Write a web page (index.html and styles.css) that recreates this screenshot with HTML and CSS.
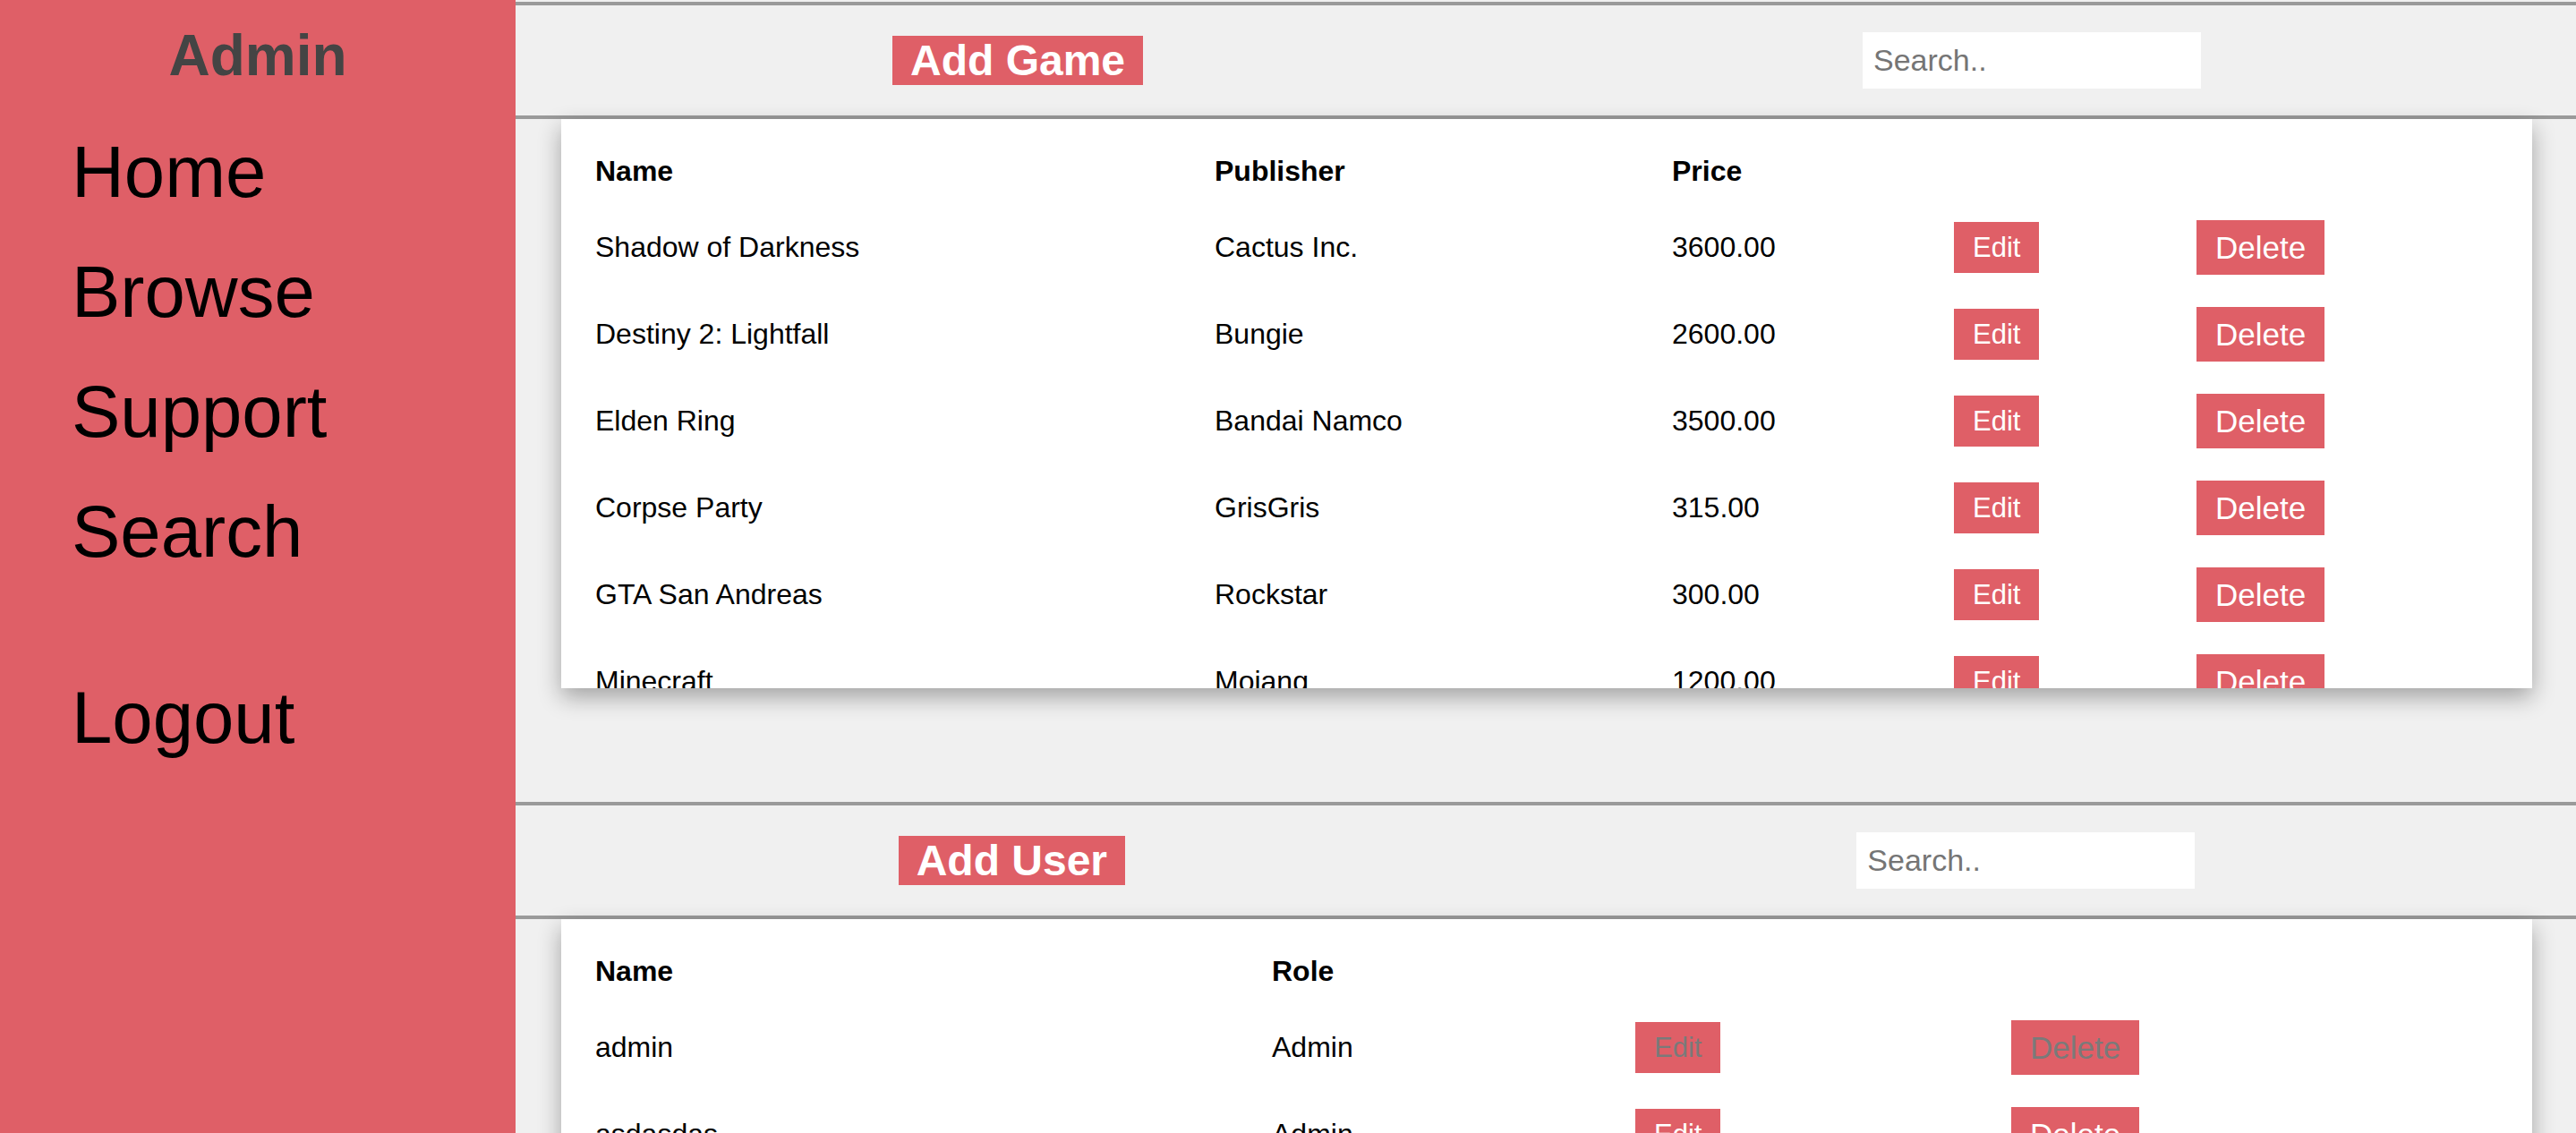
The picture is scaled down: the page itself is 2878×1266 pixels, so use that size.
FILE: index.html
```html
<!DOCTYPE html>
<html lang="en">
<head>
<meta charset="utf-8">
<title>Admin</title>
<link rel="stylesheet" href="styles.css">
</head>
<body>
<aside class="sidebar">
  <h1 class="brand">Admin</h1>
  <nav class="nav">
    <a class="nav-link" href="#">Home</a>
    <a class="nav-link" href="#">Browse</a>
    <a class="nav-link" href="#">Support</a>
    <a class="nav-link" href="#">Search</a>
    <a class="nav-link nav-logout" href="#">Logout</a>
  </nav>
</aside>
<main class="main">
  <section class="panel panel-first">
    <div class="bar">
      <button class="add-btn">Add Game</button>
      <input class="search" type="text" placeholder="Search..">
    </div>
    <div class="card">
      <table class="grid">
        <colgroup>
          <col class="g-c1"><col class="g-c2"><col class="g-c3"><col class="g-c4"><col>
        </colgroup>
        <thead>
          <tr><th>Name</th><th>Publisher</th><th>Price</th><th></th><th></th></tr>
        </thead>
        <tbody>
          <tr><td>Shadow of Darkness</td><td>Cactus Inc.</td><td>3600.00</td><td><button class="btn btn-edit">Edit</button></td><td><button class="btn btn-del">Delete</button></td></tr>
          <tr><td>Destiny 2: Lightfall</td><td>Bungie</td><td>2600.00</td><td><button class="btn btn-edit">Edit</button></td><td><button class="btn btn-del">Delete</button></td></tr>
          <tr><td>Elden Ring</td><td>Bandai Namco</td><td>3500.00</td><td><button class="btn btn-edit">Edit</button></td><td><button class="btn btn-del">Delete</button></td></tr>
          <tr><td>Corpse Party</td><td>GrisGris</td><td>315.00</td><td><button class="btn btn-edit">Edit</button></td><td><button class="btn btn-del">Delete</button></td></tr>
          <tr><td>GTA San Andreas</td><td>Rockstar</td><td>300.00</td><td><button class="btn btn-edit">Edit</button></td><td><button class="btn btn-del">Delete</button></td></tr>
          <tr><td>Minecraft</td><td>Mojang</td><td>1200.00</td><td><button class="btn btn-edit">Edit</button></td><td><button class="btn btn-del">Delete</button></td></tr>
        </tbody>
      </table>
    </div>
  </section>
  <section class="panel panel-second">
    <div class="bar">
      <button class="add-btn">Add User</button>
      <input class="search" type="text" placeholder="Search..">
    </div>
    <div class="card">
      <table class="grid">
        <colgroup>
          <col class="u-c1"><col class="u-c2"><col class="u-c3"><col>
        </colgroup>
        <thead>
          <tr><th>Name</th><th>Role</th><th></th><th></th></tr>
        </thead>
        <tbody>
          <tr><td>admin</td><td>Admin</td><td><button class="btn btn-edit btn-off" disabled>Edit</button></td><td><button class="btn btn-del btn-off" disabled>Delete</button></td></tr>
          <tr><td>asdasdas</td><td>Admin</td><td><button class="btn btn-edit">Edit</button></td><td><button class="btn btn-del">Delete</button></td></tr>
        </tbody>
      </table>
    </div>
  </section>
</main>
</body>
</html>
```
FILE: styles.css
```css
html, body {
  margin: 0;
  padding: 0;
  overflow: hidden;
}
body {
  display: flex;
  font-family: "Liberation Sans", Arial, sans-serif;
  background: #f0f0f0;
  min-height: 100vh;
}
.sidebar {
  width: 576px;
  flex: 0 0 576px;
  background: #df5f67;
  padding-top: 25px;
  box-sizing: border-box;
}
.brand {
  margin: 0 0 26px;
  font-size: 64px;
  line-height: 74px;
  font-weight: bold;
  color: #444444;
  text-align: center;
}
.nav {
  display: flex;
  flex-direction: column;
}
.nav-link {
  display: block;
  padding-left: 80px;
  font-size: 81.5px;
  line-height: 134px;
  color: #000;
  text-decoration: none;
}
.nav-logout {
  margin-top: 74px;
}
.main {
  flex: 1;
  background: #f0f0f0;
  min-width: 0;
}
.panel-first {
  padding-top: 2px;
}
.panel-second {
  margin-top: 127px;
}
.bar {
  height: 123px;
  border-top: 4px solid #9a9a9a;
  border-bottom: 4px solid #9a9a9a;
  display: flex;
  align-items: center;
  justify-content: space-around;
  padding: 0 17px 0 19px;
}
.add-btn {
  background: #df5f67;
  color: #fff;
  border: none;
  font-family: "Liberation Sans", Arial, sans-serif;
  font-weight: bold;
  font-size: 48px;
  line-height: normal;
  padding: 0 20px;
  margin: 0;
}
.search {
  width: 378px;
  height: 63px;
  box-sizing: border-box;
  border: none;
  background: #fff;
  padding: 0 12px;
  font-family: "Liberation Sans", Arial, sans-serif;
  font-size: 34px;
  color: #000;
  outline: none;
  margin: 0;
}
.search::placeholder {
  color: #757575;
}
.card {
  margin: 0 49px 0 51px;
  height: 636px;
  overflow: hidden;
  background: #fff;
  padding: 22px 38px 0;
  box-sizing: border-box;
  box-shadow: 0 10px 24px rgba(0, 0, 0, 0.32);
}
.grid {
  width: 100%;
  border-collapse: collapse;
  table-layout: fixed;
  font-size: 32px;
  color: #000;
}
.grid th, .grid td {
  text-align: left;
  padding: 18px 0;
  vertical-align: middle;
  white-space: nowrap;
}
.grid th {
  font-weight: bold;
}
.g-c1 { width: 692px; }
.g-c2 { width: 511px; }
.g-c3 { width: 315px; }
.g-c4 { width: 271px; }
.u-c1 { width: 756px; }
.u-c2 { width: 406px; }
.u-c3 { width: 420px; }
.btn {
  background: #df5f67;
  color: #fff;
  border: none;
  margin: 0;
  padding: 10.5px 21px;
  line-height: normal;
  font-family: "Liberation Sans", Arial, sans-serif;
  vertical-align: middle;
}
.btn-edit {
  font-size: 31px;
}
.btn-del {
  font-size: 35px;
}
.btn-off {
  color: #7a7a7a;
}
```
